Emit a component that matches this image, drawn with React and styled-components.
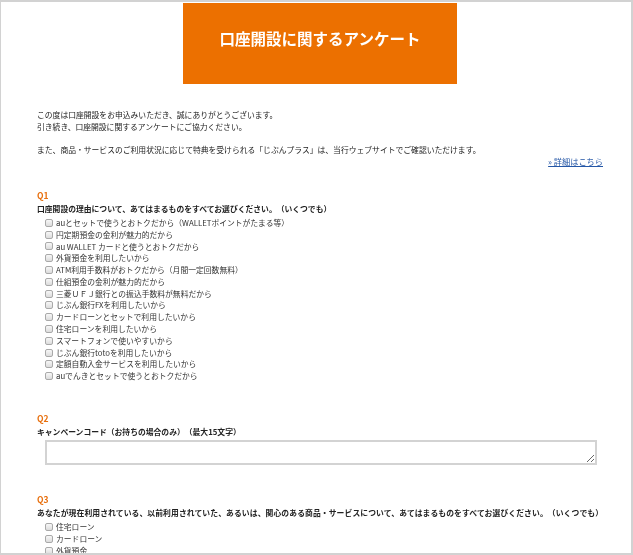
import React from 'react';
import styled, { createGlobalStyle } from 'styled-components';

const GlobalStyle = createGlobalStyle`
  body {
    margin: 0;
    background: #fff;
    font-family: "Noto Sans CJK JP", "Noto Sans", sans-serif;
  }
`;

const q1Options = [
  'auとセットで使うとおトクだから（WALLETポイントがたまる等）',
  '円定期預金の金利が魅力的だから',
  'au WALLET カードと使うとおトクだから',
  '外貨預金を利用したいから',
  'ATM利用手数料がおトクだから（月間一定回数無料）',
  '仕組預金の金利が魅力的だから',
  '三菱ＵＦＪ銀行との振込手数料が無料だから',
  'じぶん銀行FXを利用したいから',
  'カードローンとセットで利用したいから',
  '住宅ローンを利用したいから',
  'スマートフォンで使いやすいから',
  'じぶん銀行totoを利用したいから',
  '定額自動入金サービスを利用したいから',
  'auでんきとセットで使うとおトクだから',
];

const q3Options = ['住宅ローン', 'カードローン', '外貨預金'];

function CheckList({ items }) {
  return (
    <List>
      {items.map((text) => (
        <Option key={text}>
          <Box type="checkbox" />
          <span>{text}</span>
        </Option>
      ))}
    </List>
  );
}

export default function App() {
  return (
    <>
      <GlobalStyle />
      <Frame>
        <Page>
          <Header>口座開設に関するアンケート</Header>
          <Content>
            <Intro>
              この度は口座開設をお申込みいただき、誠にありがとうございます。
              <br />
              引き続き、口座開設に関するアンケートにご協力ください。
            </Intro>
            <Intro $gap>
              また、商品・サービスのご利用状況に応じて特典を受けられる「じぶんプラス」は、当行ウェブサイトでご確認いただけます。
            </Intro>
            <MoreLink href="#">» 詳細はこちら</MoreLink>

            <Question>
              <QLabel>Q1</QLabel>
              <QText>口座開設の理由について、あてはまるものをすべてお選びください。（いくつでも）</QText>
              <CheckList items={q1Options} />
            </Question>

            <Question $space={30}>
              <QLabel>Q2</QLabel>
              <QText>キャンペーンコード（お持ちの場合のみ）（最大15文字）</QText>
              <CodeField />
            </Question>

            <Question $space={28}>
              <QLabel>Q3</QLabel>
              <QText $wide>
                あなたが現在利用されている、以前利用されていた、あるいは、関心のある商品・サービスについて、あてはまるものをすべてお選びください。（いくつでも）
              </QText>
              <CheckList items={q3Options} />
            </Question>
          </Content>
        </Page>
      </Frame>
    </>
  );
}

const Frame = styled.div`
  width: 633px;
  height: 555px;
  box-sizing: border-box;
  border: 2px solid #d2d2d2;
  border-left-width: 1px;
  overflow: hidden;
  background: #fff;
`;

const Page = styled.div`
  width: 638px;
  margin-top: 1px;
`;

const Header = styled.div`
  width: 274px;
  height: 81px;
  box-sizing: border-box;
  margin: 0 auto;
  padding-top: 26px;
  background: #ec7000;
  color: #fff;
  text-align: center;
  font-size: 15.5px;
  line-height: 18px;
  font-weight: bold;
`;

const Content = styled.div`
  padding: 0 36px;
  color: #222;
  font-size: 7.8px;
  line-height: 12px;
  text-spacing-trim: space-all;
`;

const Intro = styled.p`
  margin: ${(p) => (p.$gap ? '11px' : '25px')} 0 0;
`;

const MoreLink = styled.a`
  display: block;
  width: fit-content;
  margin: -1px 0 0 auto;
  color: #2456a6;
  text-decoration: underline;
  font-size: 8.2px;
`;

const Question = styled.section`
  margin-top: ${(p) => p.$space ?? 22}px;
`;

const QLabel = styled.div`
  color: #e8700f;
  font-weight: bold;
  font-size: 8.5px;
`;

const QText = styled.div`
  margin-top: 2px;
  font-weight: bold;
  letter-spacing: ${(p) => (p.$wide ? '0.1px' : '0')};
  white-space: nowrap;
`;

const List = styled.div`
  margin-top: 2px;
  padding-left: 8px;
`;

const Option = styled.label`
  display: flex;
  align-items: center;
  height: 11.8px;
  color: #333;
`;

const Box = styled.input`
  appearance: none;
  width: 8px;
  height: 8px;
  margin: 0 3px 0 0;
  flex: none;
  border: 1px solid #a9a9a9;
  border-radius: 2px;
  background: linear-gradient(#f7f7f7, #dcdcdc);
  box-sizing: border-box;
`;

const CodeField = styled.textarea`
  display: block;
  width: 552px;
  height: 25px;
  margin: 2px 0 0 8px;
  box-sizing: border-box;
  border: 2px solid #d3d3d3;
  background: #fff;
  resize: vertical;
  font-family: inherit;
`;
